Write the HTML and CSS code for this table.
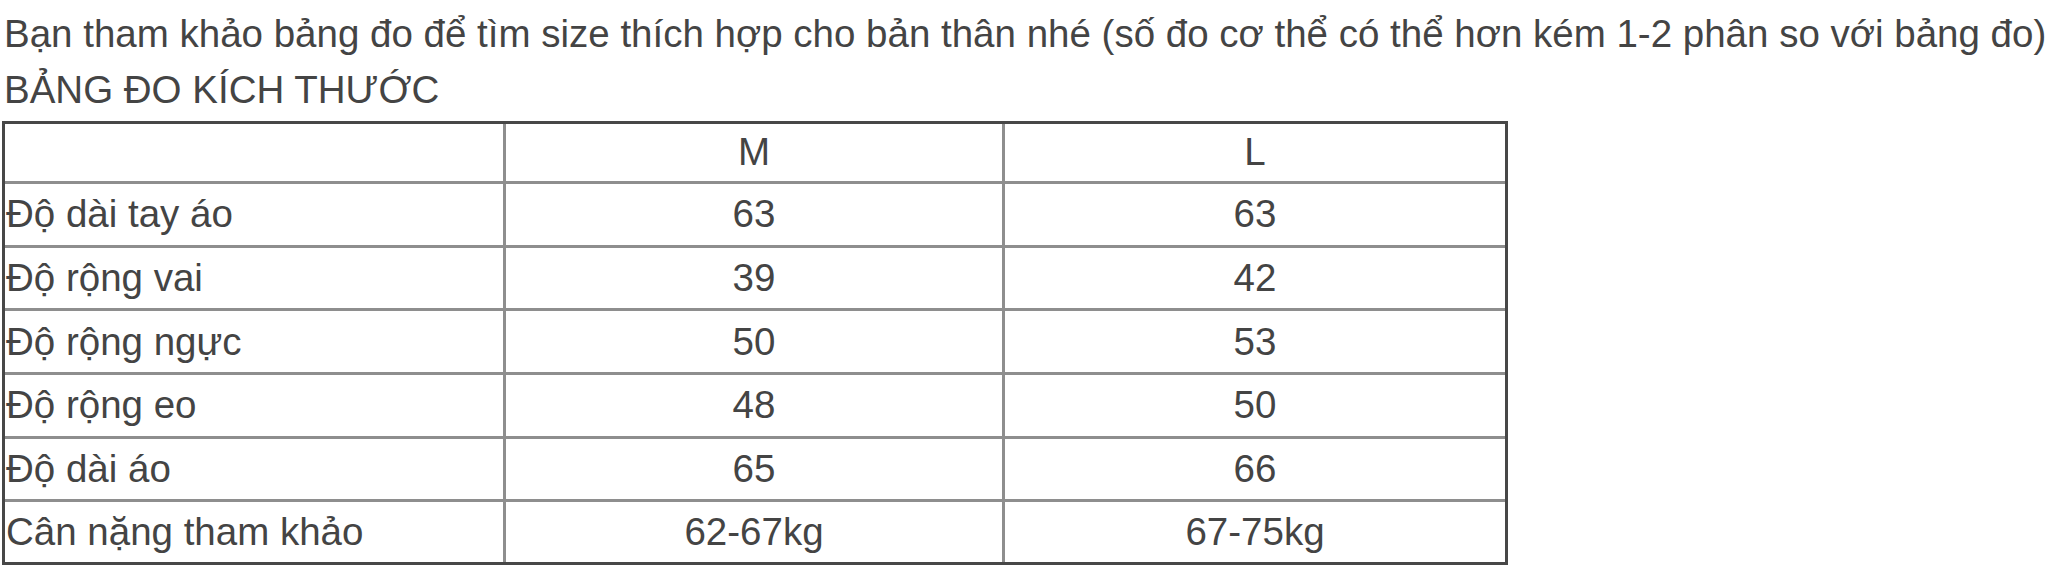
FILE: index.html
```html
<!DOCTYPE html>
<html lang="vi">
<head>
<meta charset="utf-8">
<title>Bảng đo kích thước</title>
<link rel="stylesheet" href="styles.css">
</head>
<body>
<div class="page">
  <p class="intro">Bạn tham khảo bảng đo để tìm size thích hợp cho bản thân nhé (số đo cơ thể có thể hơn kém 1-2 phân so với bảng đo)</p>
  <p class="title">BẢNG ĐO KÍCH THƯỚC</p>
  <table class="size-table">
    <colgroup>
      <col class="c1">
      <col class="c2">
      <col class="c3">
    </colgroup>
    <tr class="head">
      <td></td>
      <td>M</td>
      <td>L</td>
    </tr>
    <tr>
      <td>Độ dài tay áo</td>
      <td>63</td>
      <td>63</td>
    </tr>
    <tr>
      <td>Độ rộng vai</td>
      <td>39</td>
      <td>42</td>
    </tr>
    <tr>
      <td>Độ rộng ngực</td>
      <td>50</td>
      <td>53</td>
    </tr>
    <tr>
      <td>Độ rộng eo</td>
      <td>48</td>
      <td>50</td>
    </tr>
    <tr>
      <td>Độ dài áo</td>
      <td>65</td>
      <td>66</td>
    </tr>
    <tr class="last">
      <td>Cân nặng tham khảo</td>
      <td>62-67kg</td>
      <td>67-75kg</td>
    </tr>
  </table>
</div>
</body>
</html>
```

FILE: styles.css
```css
html, body {
  margin: 0;
  padding: 0;
  background: #ffffff;
}

body {
  font-family: "Liberation Sans", Arial, sans-serif;
  font-size: 38.5px;
  color: #444444;
  overflow: hidden;
}

.page {
  padding: 6px 0 0 2px;
}

.intro,
.title {
  margin: 0;
  padding-left: 2px;
  line-height: 56px;
  white-space: nowrap;
}

.size-table {
  margin-top: 3px;
  border-collapse: separate;
  border-spacing: 0;
  border: 3px solid #474747;
  table-layout: fixed;
  width: 1506px;
}

.size-table col.c1 { width: 501px; }
.size-table col.c2 { width: 499px; }
.size-table col.c3 { width: 500px; }

.size-table td {
  padding: 0;
  height: 63.67px;
  box-sizing: border-box;
  text-align: center;
  vertical-align: middle;
  line-height: 1.15;
  border-right: 3px solid #8e8e8e;
  border-bottom: 3px solid #8e8e8e;
  white-space: nowrap;
}

.size-table tr.head td {
  height: 60px;
}

.size-table tr.last td {
  height: 60px;
  border-bottom: none;
}

.size-table td:first-child {
  text-align: left;
  padding-left: 1px;
}

.size-table td:last-child {
  border-right: none;
}
```
